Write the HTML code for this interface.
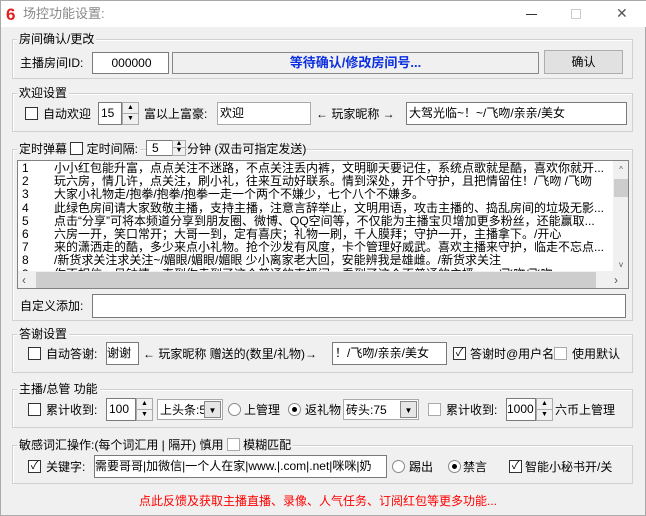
<!DOCTYPE html>
<html><head><meta charset="utf-8"><style>
*{box-sizing:border-box;margin:0;padding:0}
body{width:646px;height:516px;background:#f0f0f0;font-family:"Liberation Sans","Noto Sans CJK SC",sans-serif;font-size:12px;color:#000;position:relative;overflow:hidden;border:1px solid #aaa}
.a{position:absolute;white-space:nowrap;line-height:14px}
.g{position:absolute;border:1px solid #d0d0d0;box-shadow:inset 1px 1px 0 #fff}
.gl{position:absolute;background:#f0f0f0;padding:0 2px;line-height:14px}
.in{position:absolute;background:#fff;border:1px solid #7a7a7a;line-height:20px;padding-left:2px;overflow:hidden;white-space:nowrap}
.cb{position:absolute;width:13px;height:13px;border:1px solid #333;background:#fff;font-size:11px;line-height:11px;text-align:center}
.rb{position:absolute;width:13px;height:13px;border:1px solid #888;border-radius:50%;background:#fff}
.rb.on::after{content:"";position:absolute;left:3px;top:3px;width:5px;height:5px;border-radius:50%;background:#000}
.sp{position:absolute;width:17px;border:1px solid #aaa;background:#f0f0f0}
.sp div{height:50%;border-bottom:1px solid #aaa;font-size:7px;text-align:center;line-height:10px}
.dd{position:absolute;background:#fff;border:1px solid #aaa;padding-left:2px;line-height:20px;overflow:hidden}
.dd b{position:absolute;right:1px;top:1px;bottom:1px;width:17px;background:#e6e6e6;border:1px solid #888;font-size:8px;text-align:center;line-height:17px;font-weight:normal}
</style></head><body>
<div style="position:absolute;left:0;top:0;width:646px;height:26px;background:#fff"></div>
<div class="a" style="left:5px;top:5px;color:#e02020;font-weight:bold;font-size:17px;line-height:17px">6</div>
<div class="a" style="left:22px;top:6px;color:#888;font-size:13px">场控功能设置:</div>
<div style="position:absolute;left:525px;top:13px;width:11px;height:1px;background:#333"></div>
<div style="position:absolute;left:570px;top:8px;width:10px;height:10px;border:1px solid #ccc"></div>
<div class="a" style="left:615px;top:5px;color:#555;font-size:14px">✕</div>

<div class="g" style="left:11px;top:38px;width:621px;height:40px"></div>
<div class="gl" style="left:16px;top:31px">房间确认/更改</div>
<div class="a" style="left:19px;top:55px">主播房间ID:</div>
<div class="in" style="left:91px;top:51px;width:77px;height:22px;text-align:center">000000</div>
<div style="position:absolute;left:171px;top:51px;width:367px;height:22px;border:1px solid #888;background:#f0f0f0;color:#0a2ee0;font-weight:bold;font-size:13px;text-align:center;line-height:20px">等待确认/修改房间号...</div>
<div style="position:absolute;left:543px;top:49px;width:79px;height:24px;border:1px solid #adadad;background:#e1e1e1;text-align:center;line-height:22px">确认</div>

<div class="g" style="left:11px;top:92px;width:621px;height:39px"></div>
<div class="gl" style="left:16px;top:85px">欢迎设置</div>
<div class="cb" style="left:24px;top:106px"></div>
<div class="a" style="left:42px;top:106px">自动欢迎</div>
<div class="in" style="left:97px;top:101px;width:24px;height:23px">15</div>
<div class="sp" style="left:121px;top:101px;height:23px"><div>▲</div><div style="border:0">▼</div></div>
<div class="a" style="left:143px;top:106px">富以上富豪:</div>
<div class="in" style="left:216px;top:101px;width:94px;height:23px;border-color:#aaa">欢迎</div>
<div class="a" style="left:315px;top:106px">← 玩家昵称 →</div>
<div class="in" style="left:405px;top:101px;width:221px;height:23px">大驾光临~！~/飞吻/亲亲/美女</div>

<div class="g" style="left:11px;top:148px;width:621px;height:172px"></div>
<div class="gl" style="left:16px;top:141px">定时弹幕 <span style="display:inline-block;width:13px;height:13px;border:1px solid #333;background:#fff;vertical-align:-2px"></span> 定时间隔:</div>
<div class="in" style="left:145px;top:139px;width:27px;height:16px;line-height:14px;padding-left:5px">5</div>
<div class="sp" style="left:171px;top:139px;height:16px;width:14px"><div style="line-height:6px">▲</div><div style="border:0;line-height:6px">▼</div></div>
<div class="gl" style="left:186px;top:141px;padding:0">分钟 (双击可指定发送)</div>
<div style="position:absolute;left:16px;top:159px;width:612px;height:129px;border:1px solid #828282;background:#fff;overflow:hidden">
<div style="position:absolute;left:0;top:0;width:595px;height:110px;overflow:hidden;line-height:13.2px">
<div style="position:relative;top:1px">
<div><span style="display:inline-block;width:36px;padding-left:4px">1</span>小小红包能升富，点点关注不迷路，不点关注丢内裤，文明聊天要记住，系统点歌就是酷，喜欢你就开...</div>
<div><span style="display:inline-block;width:36px;padding-left:4px">2</span>玩六房，情几许，点关注，刷小礼，往来互动好联系。情到深处，开个守护，且把情留住！/飞吻 /飞吻</div>
<div><span style="display:inline-block;width:36px;padding-left:4px">3</span>大家小礼物走/抱拳/抱拳/抱拳一走一个两个不嫌少，七个八个不嫌多。</div>
<div><span style="display:inline-block;width:36px;padding-left:4px">4</span>此绿色房间请大家致敬主播，支持主播，注意言辞举止，文明用语，攻击主播的、捣乱房间的垃圾无影...</div>
<div><span style="display:inline-block;width:36px;padding-left:4px">5</span>点击“分享”可将本频道分享到朋友圈、微博、QQ空间等，不仅能为主播宝贝增加更多粉丝，还能赢取...</div>
<div><span style="display:inline-block;width:36px;padding-left:4px">6</span>六房一开，笑口常开；大哥一到，定有喜庆；礼物一刷，千人膜拜；守护一开，主播拿下。/开心</div>
<div><span style="display:inline-block;width:36px;padding-left:4px">7</span>来的潇洒走的酷，多少来点小礼物。抢个沙发有风度，卡个管理好威武。喜欢主播来守护，临走不忘点...</div>
<div><span style="display:inline-block;width:36px;padding-left:4px">8</span>/新货求关注求关注~/媚眼/媚眼/媚眼 少小离家老大回，安能辨我是雄雌。/新货求关注</div>
<div><span style="display:inline-block;width:36px;padding-left:4px">9</span>你不相信一见钟情，直到你走到了这个普通的直播间，看到了这个不普通的主播。。。/飞吻/飞吻</div>
</div></div>
<div style="position:absolute;left:595px;top:0;width:16px;height:110px;background:#f0f0f0"><div style="position:absolute;left:1px;top:18px;width:14px;height:18px;background:#cdcdcd"></div><div style="position:absolute;top:4px;width:16px;text-align:center;font-size:8px;color:#555">^</div><div style="position:absolute;bottom:2px;width:16px;text-align:center;font-size:8px;color:#555">v</div></div>
<div style="position:absolute;left:0;top:110px;width:611px;height:18px;background:#f0f0f0"><div style="position:absolute;left:18px;top:1px;width:560px;height:16px;background:#cdcdcd"></div><div class="a" style="left:4px;top:2px;color:#555">‹</div><div class="a" style="left:596px;top:2px;color:#555">›</div></div>
</div>
<div class="a" style="left:19px;top:298px">自定义添加:</div>
<div class="in" style="left:91px;top:293px;width:534px;height:24px"></div>

<div class="g" style="left:11px;top:333px;width:621px;height:39px"></div>
<div class="gl" style="left:16px;top:326px">答谢设置</div>
<div class="cb" style="left:27px;top:346px"></div>
<div class="a" style="left:45px;top:346px">自动答谢:</div>
<div class="in" style="left:105px;top:341px;width:33px;height:23px;padding-left:0">谢谢</div>
<div class="a" style="left:142px;top:346px">← 玩家昵称 赠送的(数里/礼物)→</div>
<div class="in" style="left:331px;top:341px;width:115px;height:23px">！/飞吻/亲亲/美女</div>
<div class="cb" style="left:452px;top:346px">✓</div>
<div class="a" style="left:469px;top:346px">答谢时@用户名</div>
<div class="cb" style="left:553px;top:346px;border-color:#aaa"></div>
<div class="a" style="left:571px;top:346px">使用默认</div>

<div class="g" style="left:11px;top:388px;width:621px;height:39px"></div>
<div class="gl" style="left:16px;top:381px">主播/总管 功能</div>
<div class="cb" style="left:27px;top:402px"></div>
<div class="a" style="left:45px;top:402px">累计收到:</div>
<div class="in" style="left:105px;top:397px;width:30px;height:23px">100</div>
<div class="sp" style="left:135px;top:397px;height:23px"><div>▲</div><div style="border:0">▼</div></div>
<div class="dd" style="left:156px;top:398px;width:66px;height:21px">上头条:5<b>▼</b></div>
<div class="rb" style="left:227px;top:402px"></div>
<div class="a" style="left:243px;top:402px">上管理</div>
<div class="rb on" style="left:287px;top:402px"></div>
<div class="a" style="left:304px;top:402px">返礼物</div>
<div class="dd" style="left:342px;top:398px;width:76px;height:21px">砖头:75<b>▼</b></div>
<div class="cb" style="left:427px;top:402px;border-color:#aaa"></div>
<div class="a" style="left:445px;top:402px">累计收到:</div>
<div class="in" style="left:505px;top:397px;width:30px;height:23px;padding-left:0">1000</div>
<div class="sp" style="left:535px;top:397px;height:23px"><div>▲</div><div style="border:0">▼</div></div>
<div class="a" style="left:554px;top:402px">六币上管理</div>

<div class="g" style="left:11px;top:444px;width:621px;height:39px"></div>
<div class="gl" style="left:16px;top:437px">敏感词汇操作:(每个词汇用 | 隔开) 慎用 <span style="display:inline-block;width:13px;height:13px;border:1px solid #aaa;background:#fff;vertical-align:-2px"></span> 模糊匹配</div>
<div class="cb" style="left:27px;top:459px">✓</div>
<div class="a" style="left:45px;top:459px">关键字:</div>
<div class="in" style="left:93px;top:454px;width:293px;height:23px;padding-left:0">需要哥哥|加微信|一个人在家|www.|.com|.net|咪咪|奶</div>
<div class="rb" style="left:391px;top:459px"></div>
<div class="a" style="left:408px;top:459px">踢出</div>
<div class="rb on" style="left:447px;top:459px"></div>
<div class="a" style="left:462px;top:459px">禁言</div>
<div class="cb" style="left:508px;top:459px">✓</div>
<div class="a" style="left:524px;top:459px">智能小秘书开/关</div>

<div class="a" style="left:138px;top:493px;color:#f00">点此反馈及获取主播直播、录像、人气任务、订阅红包等更多功能...</div>
</body></html>
